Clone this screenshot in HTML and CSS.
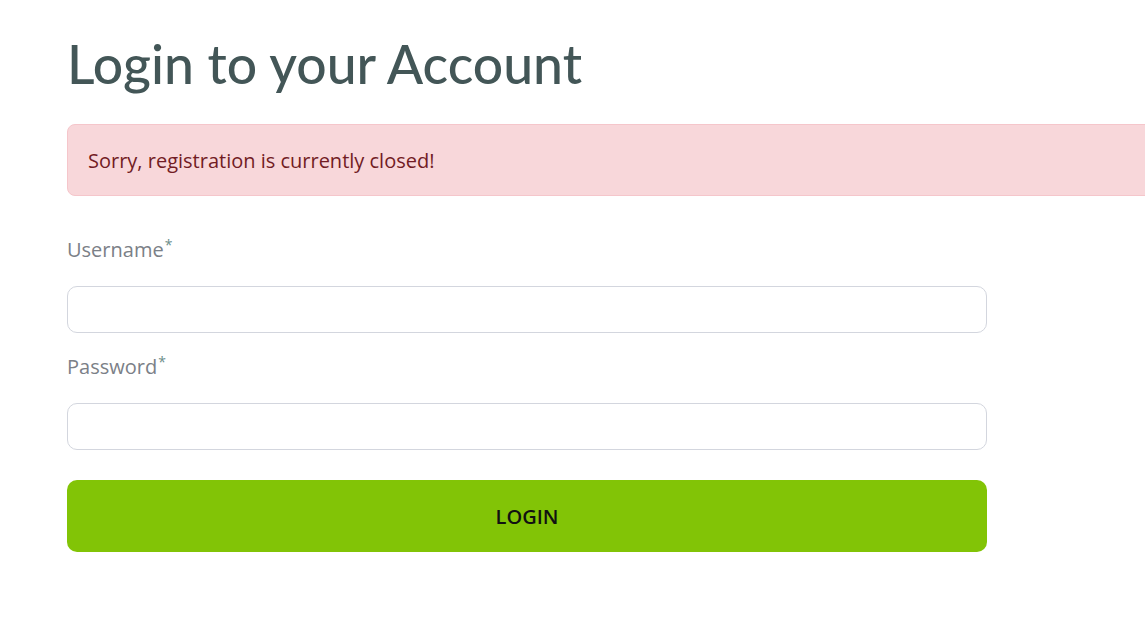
FILE: index.html
```html
<!DOCTYPE html>
<html>
<head>
<meta charset="utf-8">
<link rel="stylesheet" href="styles.css">
</head>
<body>
<main class="page">
  <h1 class="title">Login to your Account</h1>
  <div class="alert">Sorry, registration is currently closed!</div>
  <form class="form">
    <label class="label" for="u">Username<sup class="req">*</sup></label>
    <input class="input" id="u" type="text">
    <label class="label" for="p">Password<sup class="req">*</sup></label>
    <input class="input" id="p" type="password">
    <button class="btn" type="button">LOGIN</button>
  </form>
</main>
</body>
</html>
```
FILE: styles.css
```css
html, body {
  margin: 0;
  padding: 0;
  background: #fff;
  overflow: hidden;
}
body {
  font-family: "Open Sans", "Liberation Sans", sans-serif;
}
.page {
  padding: 31px 0 0 67px;
}
.title {
  margin: 0;
  font-family: "Lato", "Open Sans", sans-serif;
  font-weight: 500;
  font-size: 53.5px;
  line-height: 64px;
  color: #435657;
}
.alert {
  margin-top: 29px;
  width: 1100px;
  height: 72px;
  box-sizing: border-box;
  padding: 0 20px;
  display: flex;
  align-items: center;
  background: #f8d7da;
  border: 1px solid #f5c6cb;
  border-radius: 8px 0 0 8px;
  color: #721c24;
  font-size: 20px;
}
.form {
  width: 920px;
  display: flex;
  flex-direction: column;
  padding-top: 40px;
}
.label {
  font-size: 20px;
  line-height: 28px;
  color: #7b8087;
  margin-bottom: 22px;
}
.req {
  color: #6c8d8a;
  font-size: 14px;
  vertical-align: top;
  position: relative;
  top: -5px;
  margin-left: 1px;
}
.input {
  height: 47px;
  box-sizing: border-box;
  border: 1px solid #d3d6de;
  border-radius: 10px;
  margin: 0 0 20px;
  font-size: 16px;
  padding: 0 14px;
}
.btn {
  margin-top: 10px;
  height: 72px;
  border: none;
  border-radius: 10px;
  background: #82c406;
  color: #111;
  font-family: "Open Sans", sans-serif;
  font-weight: 600;
  font-size: 20px;
}
```
